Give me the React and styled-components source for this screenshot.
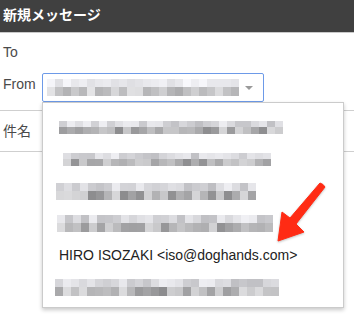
import React from 'react';
import styled, { createGlobalStyle } from 'styled-components';

const GlobalStyle = createGlobalStyle`
    body {
        margin: 0;
        background: #ffffff;
        font-family: "Liberation Sans", "Noto Sans CJK JP", Arial, sans-serif;
    }
`;

// deterministic greys for the pixelated (blurred) addresses
const makeCells = (seed, count, light, dark) => {
    let s = seed;
    const rand = () => {
        s = (s * 9301 + 49297) % 233280;
        return s / 233280;
    };
    const top = [];
    const bottom = [];
    for (let i = 0; i < count; i++) {
        const t = Math.round(light[0] + rand() * (light[1] - light[0]));
        const b = Math.round(dark[0] + rand() * (dark[1] - dark[0]));
        top.push(`rgb(${t},${t},${t + 4})`);
        bottom.push(`rgb(${b},${b},${b + 2})`);
    }
    return { top, bottom };
};

const Pixelated = ({ seed, count, rowHeight = 8, cell = 8, offset = 0, light = [190, 240], dark = [140, 220] }) => {
    const { top, bottom } = makeCells(seed, count, light, dark);
    return (
        <BlurBlock style={{ marginLeft: offset }}>
            <BlurRow>
                {top.map((c, i) => (
                    <Cell key={i} $w={cell} $h={rowHeight - 1} style={{ background: c }} />
                ))}
            </BlurRow>
            <BlurRow>
                {bottom.map((c, i) => (
                    <Cell key={i} $w={cell} $h={rowHeight} style={{ background: c }} />
                ))}
            </BlurRow>
        </BlurBlock>
    );
};

const App = () => {
    return (
        <>
            <GlobalStyle />
            <Page>
                <Header>新規メッセージ</Header>
                <ToRow>
                    <Label>To</Label>
                </ToRow>
                <FromRow>
                    <Label>From</Label>
                    <Select>
                        <Pixelated seed={17} count={24} rowHeight={9} light={[222, 248]} dark={[170, 232]} />
                        <Caret />
                    </Select>
                    <Menu>
                        <Item><Pixelated seed={3} count={28} rowHeight={7} offset={0} /></Item>
                        <Item><Pixelated seed={11} count={26} rowHeight={7} offset={4} /></Item>
                        <Item><Pixelated seed={29} count={25} rowHeight={9} offset={-3} /></Item>
                        <Item><Pixelated seed={41} count={27} rowHeight={9} offset={-2} /></Item>
                        <Item><Address>HIRO ISOZAKI &lt;iso@doghands.com&gt;</Address></Item>
                        <Item><Pixelated seed={57} count={28} rowHeight={9} offset={-4} /></Item>
                    </Menu>
                </FromRow>
                <SubjectRow>
                    <Label>件名</Label>
                </SubjectRow>
                <Pointer viewBox="0 0 354 325">
                    <polygon
                        points="278,241 282,212 290,218 320,183 323,184.5 325,187 296,224 304,232"
                        fill="#ff2b14"
                        stroke="#ff2b14"
                        strokeWidth="1"
                        strokeLinejoin="round"
                    />
                </Pointer>
            </Page>
        </>
    );
};

const Page = styled.div`
    position: relative;
    width: 354px;
    height: 325px;
    overflow: hidden;
    background: #ffffff;
`;

const Header = styled.div`
    height: 32px;
    background: #404040;
    border-bottom: 1px solid #c9c9c9;
    color: #ffffff;
    font-size: 14px;
    font-weight: bold;
    line-height: 31px;
    padding-left: 3px;
`;

const Label = styled.div`
    color: #4a4a4a;
    font-size: 14px;
    line-height: 24px;
    padding-left: 3px;
    width: 39px;
    flex-shrink: 0;
`;

const ToRow = styled.div`
    height: 38px;
    display: flex;
    align-items: center;
`;

const FromRow = styled.div`
    position: relative;
    height: 39px;
    display: flex;
    align-items: flex-start;
    padding-top: 1px;
    box-sizing: border-box;
    z-index: 2;
`;

const Select = styled.div`
    width: 222px;
    height: 29px;
    margin-top: 1px;
    box-sizing: border-box;
    border: 1px solid #6d9ae8;
    border-radius: 2px;
    display: flex;
    align-items: center;
    padding-left: 4px;
    gap: 6px;
`;

const Caret = styled.div`
    width: 0;
    height: 0;
    border-left: 4px solid transparent;
    border-right: 4px solid transparent;
    border-top: 4px solid #9a9a9a;
    margin-top: 1px;
`;

const Menu = styled.div`
    position: absolute;
    left: 42px;
    top: 31px;
    width: 302px;
    height: 206px;
    box-sizing: border-box;
    background: #ffffff;
    border: 1px solid #cbcbcb;
    box-shadow: 0 2px 4px rgba(0, 0, 0, 0.22);
    padding-top: 8px;
`;

const Item = styled.div`
    height: 32px;
    display: flex;
    align-items: center;
    padding-left: 16px;
`;

const Address = styled.div`
    font-size: 14px;
    color: #222222;
`;

const BlurBlock = styled.div`
    display: flex;
    flex-direction: column;
`;

const BlurRow = styled.div`
    display: flex;
`;

const Cell = styled.div`
    width: ${p => p.$w}px;
    height: ${p => p.$h}px;
`;

const SubjectRow = styled.div`
    height: 42px;
    box-sizing: border-box;
    border-top: 1px solid #cfcfcf;
    border-bottom: 1px solid #cfcfcf;
    display: flex;
    align-items: center;
`;

const Pointer = styled.svg`
    position: absolute;
    left: 0;
    top: 0;
    width: 354px;
    height: 325px;
    z-index: 3;
    pointer-events: none;
    filter: drop-shadow(0 1px 1px rgba(0, 0, 0, 0.25));
`;

export default App;
